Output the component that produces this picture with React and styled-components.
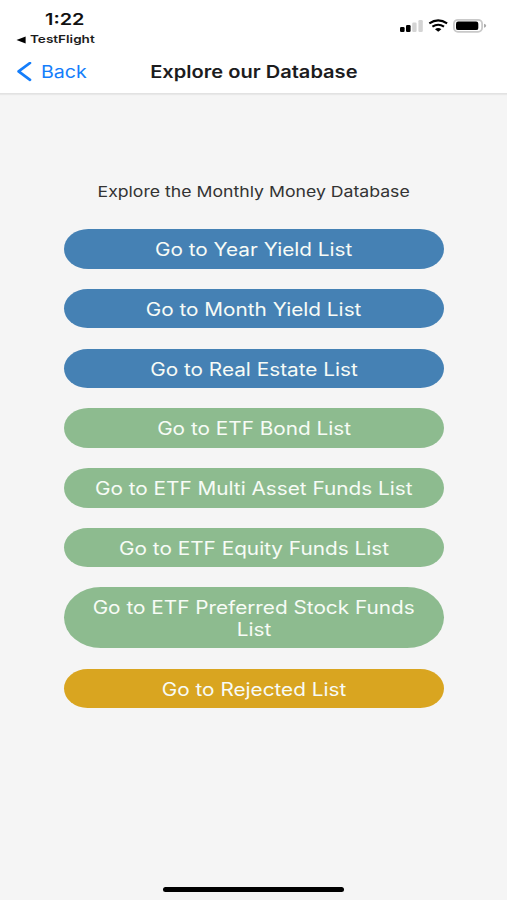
import React from "react";
import styled, { createGlobalStyle } from "styled-components";

const GlobalStyle = createGlobalStyle`
  * { box-sizing: border-box; }
  body {
    margin: 0;
    background: #f5f5f5;
    font-family: Inter, "Liberation Sans", sans-serif;
  }
`;

const Screen = styled.div`
  width: 507px;
  height: 900px;
  display: flex;
  flex-direction: column;
  overflow: hidden;
  background: #f5f5f5;
`;

const Header = styled.header`
  height: 94px;
  flex: none;
  background: #fff;
  border-bottom: 1px solid #e2e2e2;
  box-shadow: 0 1px 1px rgba(0, 0, 0, 0.05);
`;

const StatusBar = styled.div`
  height: 48px;
  display: flex;
  justify-content: space-between;
  padding: 0 20px 0 16px;
`;

const ClockArea = styled.div`
  display: flex;
  flex-direction: column;
  padding-top: 9px;
`;

/* Text is set wide, about a sixth broader than its natural shape. */
const Wide = styled.span`
  display: inline-block;
  white-space: nowrap;
  transform: scaleX(${(p) => p.$x || 1.153});
  transform-origin: ${(p) => p.$from || "center"} center;
`;

const Clock = styled.div`
  padding-left: 28.5px;
  font-size: 16px;
  line-height: 20px;
  font-weight: 600;
  color: #111;
`;

const ReturnLink = styled.div`
  display: flex;
  align-items: center;
  gap: 4px;
  margin-top: 4px;
  font-size: 11px;
  line-height: 13px;
  font-weight: 600;
  color: #1c1c1c;
`;

const StatusIcons = styled.div`
  padding-top: 18px;
`;

const NavBar = styled.nav`
  height: 47px;
  display: grid;
  grid-template-columns: 134px 1fr 134px;
  align-items: center;
  padding-left: 16px;
  padding-right: 16px;
`;

const BackButton = styled.button`
  display: flex;
  align-items: center;
  gap: 9px;
  padding: 0;
  border: 0;
  background: none;
  font: 400 17px/22px Inter, "Liberation Sans", sans-serif;
  color: #147efb;
`;

const Title = styled.h1`
  margin: 0;
  font-size: 17px;
  line-height: 22px;
  font-weight: 600;
  text-align: center;
  color: #1c1c1e;
`;

const Main = styled.main`
  flex: 1;
  display: flex;
  flex-direction: column;
  align-items: center;
  padding: 89px 63px 0 64.3px;
`;

const Intro = styled.p`
  margin: 0 0 28.3px;
  padding-right: 2px;
  font-size: 15px;
  line-height: 18px;
  color: #333;
`;

const List = styled.div`
  width: 100%;
  display: flex;
  flex-direction: column;
  gap: 20.2px;
`;

const tones = { blue: "#4581b4", green: "#8dbb8f", gold: "#d9a520" };

const ListButton = styled.button`
  display: flex;
  flex-direction: column;
  align-items: center;
  width: 100%;
  padding: 10px 1px 8px 0;
  border: 0;
  border-radius: 37px / 30.5px;
  background: ${(p) => tones[p.$tone]};
  font: 400 18px/21.5px Inter, "Liberation Sans", sans-serif;
  color: #f7fbf6;
`;

const HomeArea = styled.footer`
  height: 14px;
  flex: none;
  display: flex;
  justify-content: center;
`;

const HomeIndicator = styled.div`
  width: 181px;
  height: 5px;
  margin-top: 1px;
  border-radius: 3px;
  background: #000;
`;

const items = [
  { tone: "blue", lines: ["Go to Year Yield List"] },
  { tone: "blue", lines: ["Go to Month Yield List"] },
  { tone: "blue", lines: ["Go to Real Estate List"] },
  { tone: "green", lines: ["Go to ETF Bond List"] },
  { tone: "green", lines: ["Go to ETF Multi Asset Funds List"] },
  { tone: "green", lines: ["Go to ETF Equity Funds List"] },
  { tone: "green", lines: ["Go to ETF Preferred Stock Funds", "List"] },
  { tone: "gold", lines: ["Go to Rejected List"] },
];

export default function App() {
  return (
    <Screen>
      <GlobalStyle />
      <Header>
        <StatusBar>
          <ClockArea>
            <Clock><Wide $from="left" $x={1.24}>1:22</Wide></Clock>
            <ReturnLink>
              <svg width="10" height="8" viewBox="0 0 10 8"><path d="M9.6.4v7L.5 3.9z" fill="#000" /></svg>
              <Wide $from="left" $x={1.23}>TestFlight</Wide>
            </ReturnLink>
          </ClockArea>
          <StatusIcons>
            <svg width="88" height="16" viewBox="399 18 88 16" display="block">
              <rect x="400" y="27" width="4.6" height="5" rx="1.2" />
              <rect x="406" y="25" width="4.6" height="7" rx="1.2" />
              <rect x="412.2" y="22.5" width="4.4" height="9.5" rx="1.2" fill="#d4d4d4" />
              <rect x="418.4" y="20" width="4.4" height="12" rx="1.2" fill="#d4d4d4" />
              <g fill="none" stroke="#000" strokeWidth="2.1">
                <path d="M429.3 23.4Q438.2 17.4 447.1 23.4" />
                <path d="M432.4 26.6Q438.2 22.8 444 26.6" />
              </g>
              <path d="M435 29.2Q438.2 27 441.4 29.2L438.2 31.8z" />
              <rect x="453.9" y="19.8" width="28.2" height="12" rx="4" fill="#fff" stroke="#c9c9c9" strokeWidth="1.8" />
              <rect x="456" y="21.6" width="22.3" height="8.5" rx="2.2" />
              <path d="M484 23.8q2.2.5 2.2 2t-2.2 2z" fill="#aaa" />
            </svg>
          </StatusIcons>
        </StatusBar>
        <NavBar>
          <BackButton>
            <svg width="16" height="20" viewBox="0 0 16 20" fill="none" stroke="#147efb" strokeWidth="2.7">
              <path d="M14 1L2.6 9.4 14 17.8" strokeLinecap="round" strokeLinejoin="round" />
            </svg>
            <Wide $from="left">Back</Wide>
          </BackButton>
          <Title><Wide $x={1.18}>Explore our Database</Wide></Title>
        </NavBar>
      </Header>
      <Main>
        <Intro><Wide $x={1.177}>Explore the Monthly Money Database</Wide></Intro>
        <List>
          {items.map((item) => (
            <ListButton key={item.lines[0]} $tone={item.tone}>
              {item.lines.map((line) => <Wide key={line}>{line}</Wide>)}
            </ListButton>
          ))}
        </List>
      </Main>
      <HomeArea><HomeIndicator /></HomeArea>
    </Screen>
  );
}
